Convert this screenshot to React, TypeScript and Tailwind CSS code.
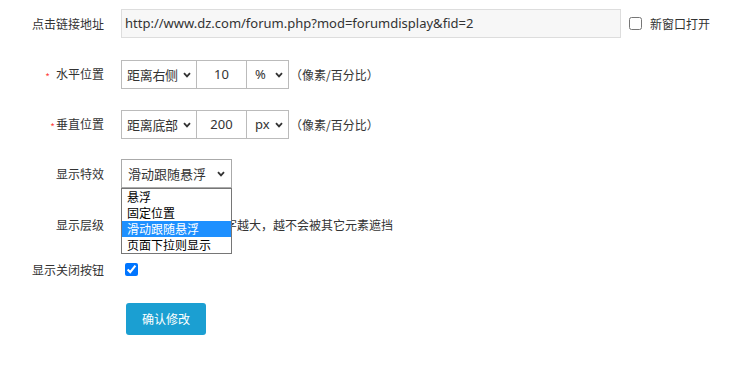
import React from 'react'

const cjk = { fontFamily: '"Noto Sans CJK SC", "Noto Sans", sans-serif' }
const latin = { fontFamily: '"Noto Sans", "Noto Sans CJK SC", sans-serif' }

function Chevron({ className = '' }: { className?: string }) {
  return (
    <svg width="8" height="6" viewBox="0 0 8 6" className={className}>
      <path d="M1 1.2 L4 4.4 L7 1.2" fill="none" stroke="#333" strokeWidth="1.8" />
    </svg>
  )
}

function Label({ children }: { children: React.ReactNode }) {
  return (
    <div className="w-[104px] shrink-0 text-right text-[12px] text-[#333]" style={cjk}>
      {children}
    </div>
  )
}

function PositionGroup({ side, value, unit }: { side: string; value: string; unit: string }) {
  return (
    <div className="flex items-center">
      <div className="flex h-[29px] border border-[#bbb] text-[13px] text-[#333]" style={cjk}>
        <div className="flex w-[75px] items-center justify-between border-r border-[#bbb] pl-[5px] pr-[5px]">
          <span className="tracking-[-0.3px]">{side}</span>
          <Chevron />
        </div>
        <div className="flex w-[50px] items-center justify-center border-r border-[#bbb]" style={latin}>
          {value}
        </div>
        <div className="flex w-[41px] items-center justify-between pl-[8px] pr-[5px]" style={latin}>
          <span>{unit}</span>
          <Chevron />
        </div>
      </div>
      <span className="ml-[1px] text-[12px] text-[#333]" style={cjk}>
        （像素/百分比）
      </span>
    </div>
  )
}

export default function App() {
  const options = ['悬浮', '固定位置', '滑动跟随悬浮', '页面下拉则显示']

  return (
    <div className="relative h-[374px] w-[740px] bg-white pt-[9px]">
      {/* link */}
      <div className="flex h-[29px] items-center">
        <Label>点击链接地址</Label>
        <div
          className="ml-[17px] flex h-[29px] w-[500px] items-center border border-[#ddd] bg-[#f7f7f7] pl-[3px] text-[13px] text-[#333]"
          style={latin}
        >
          http://www.dz.com/forum.php?mod=forumdisplay&amp;fid=2
        </div>
        <label className="ml-[8px] flex items-center text-[12px] text-[#333]" style={cjk}>
          <input type="checkbox" className="m-0 h-[13px] w-[13px]" readOnly />
          <span className="ml-[8px]">新窗口打开</span>
        </label>
      </div>

      {/* horizontal */}
      <div className="mt-[22px] flex h-[29px] items-center">
        <Label>
          <span className="mr-[6px] align-middle text-[10px] text-[#f44]">*</span>
          水平位置
        </Label>
        <div className="ml-[17px]">
          <PositionGroup side="距离右侧" value="10" unit="%" />
        </div>
      </div>

      {/* vertical */}
      <div className="mt-[21px] flex h-[29px] items-center">
        <Label>
          <span className="mr-[1px] align-middle text-[10px] text-[#f44]">*</span>
          垂直位置
        </Label>
        <div className="ml-[17px]">
          <PositionGroup side="距离底部" value="200" unit="px" />
        </div>
      </div>

      {/* effect */}
      <div className="mt-[20px] flex h-[29px] items-center">
        <Label>显示特效</Label>
        <div className="relative ml-[17px]">
          <div
            className="flex h-[29px] w-[111px] items-center justify-between border border-[#aaa] pl-[6px] pr-[6px] text-[13px] text-[#333]"
            style={cjk}
          >
            <span>滑动跟随悬浮</span>
            <Chevron />
          </div>
          <ul
            className="absolute left-0 top-[29px] z-10 w-[111px] border border-[#767676] bg-white text-[12px] leading-[16px] text-black"
            style={cjk}
          >
            {options.map((o) => (
              <li
                key={o}
                className={
                  o === '滑动跟随悬浮' ? 'h-[16px] bg-[#1e90ff] pl-[5px] text-white' : 'h-[16px] pl-[5px]'
                }
              >
                {o}
              </li>
            ))}
          </ul>
        </div>
      </div>

      {/* z-index */}
      <div className="mt-[22px] flex h-[29px] items-center">
        <Label>显示层级</Label>
        <div className="ml-[17px] flex items-center">
          <div className="h-[29px] w-[88px] border border-[#ddd] bg-[#f7f7f7]" />
          <span className="ml-[4px] text-[12px] text-[#333]" style={cjk}>
            数字越大，越不会被其它元素遮挡
          </span>
        </div>
      </div>

      {/* close button */}
      <div className="mt-[16px] flex h-[29px] items-center">
        <Label>显示关闭按钮</Label>
        <input type="checkbox" defaultChecked className="m-0 ml-[21px] h-[13px] w-[13px]" />
      </div>

      {/* submit */}
      <div className="mt-[19px] pl-[126px]">
        <button
          className="h-[32px] w-[80px] rounded-[3px] bg-[#1b9fd2] text-[12px] text-white"
          style={cjk}
        >
          确认修改
        </button>
      </div>
    </div>
  )
}
